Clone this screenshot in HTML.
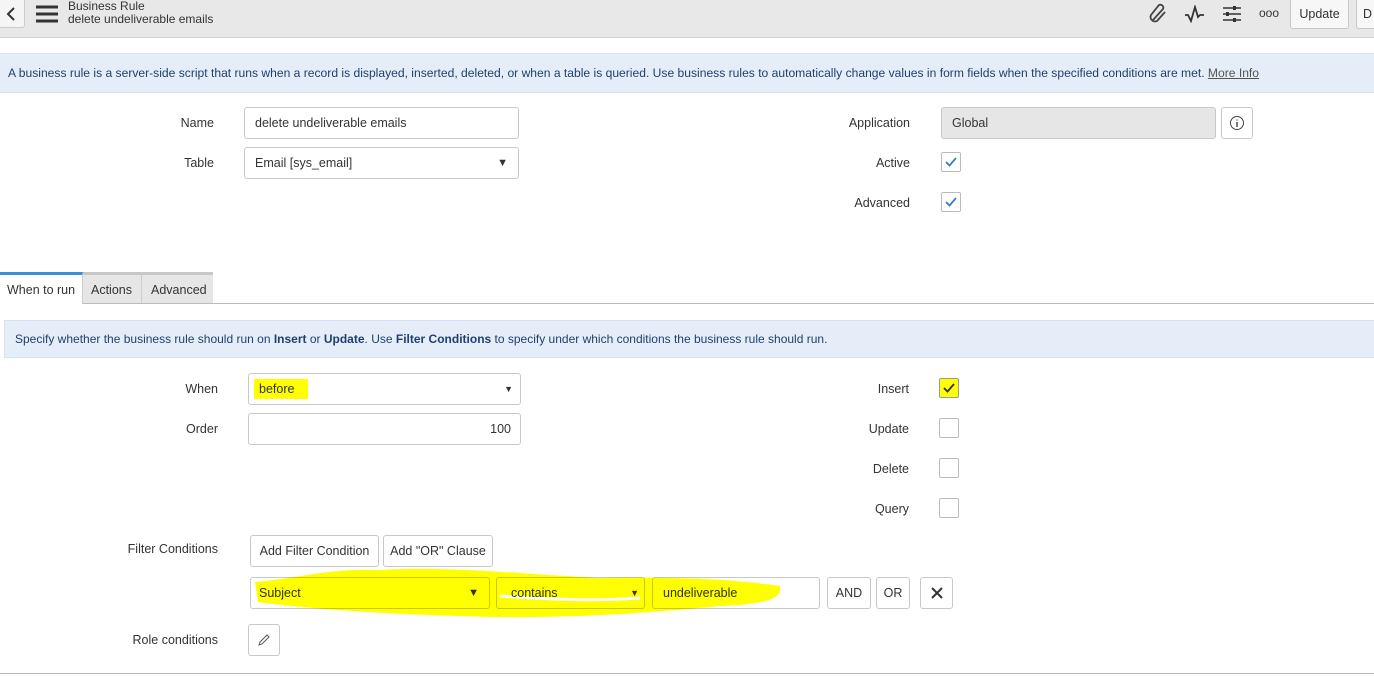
<!DOCTYPE html>
<html><head><meta charset="utf-8"><style>
*{box-sizing:border-box;margin:0;padding:0}
body{width:1374px;height:676px;position:relative;background:#fff;font-family:"Liberation Sans",sans-serif;font-size:12.5px;color:#333;overflow:hidden}
.a{position:absolute}
.lbl{position:absolute;text-align:right;white-space:nowrap;color:#333}
.box{position:absolute;border:1px solid #c8c8c8;border-radius:3px;background:#fff;padding-left:10px;display:flex;align-items:center;white-space:nowrap}
.btn{position:absolute;border:1px solid #c8c8c8;border-radius:3px;background:#fff;display:flex;align-items:center;justify-content:center;white-space:nowrap;color:#333}
.cb{position:absolute;width:20px;height:20px;border:1px solid #bbb;border-radius:2px;background:#fff}
.banner{position:absolute;background:#e5eef8;border-top:1px solid #d6e2ef;border-bottom:1px solid #d6e2ef;color:#1f3f6e;white-space:nowrap;display:flex;align-items:center}
</style></head><body>
<div class="a" style="left:0;top:0;width:1374px;height:38px;background:#e8e8e8;border-bottom:1px solid #cfcfcf"></div>
<div class="a" style="left:-2px;top:-2px;width:27px;height:30px;background:#f5f5f5;border:1px solid #ccc;border-radius:3px"></div>
<svg class="a" style="left:5px;top:6px" width="12" height="16"><path d="M9 2L3 8L9 14" stroke="#333" stroke-width="2" fill="none"/></svg>
<svg class="a" style="left:36px;top:5px" width="22" height="18"><path d="M0 2H22M0 9H22M0 16H22" stroke="#333" stroke-width="3"/></svg>
<div class="a" style="left:68px;top:0px;font-size:12px;color:#333;line-height:13px">Business Rule<br>delete undeliverable emails</div>
<svg class="a" style="left:1148px;top:3px" width="22" height="22"><path d="M5 17L15 6a3 3 0 0 0-4-4L3 12a4.5 4.5 0 0 0 6 6L17 9" stroke="#444" stroke-width="1.8" fill="none"/></svg>
<svg class="a" style="left:1184px;top:5px" width="22" height="18"><path d="M1 10L4 10L7 16L11 2L14 12L16 10L20 10" stroke="#333" stroke-width="1.8" fill="none"/></svg>
<svg class="a" style="left:1222px;top:4px" width="20" height="20"><path d="M1 4H19M1 10H19M1 16H19" stroke="#333" stroke-width="1.6"/><rect x="11" y="2" width="3" height="4" fill="#333"/><rect x="4" y="8" width="3" height="4" fill="#333"/><rect x="11" y="14" width="3" height="4" fill="#333"/></svg>
<div class="a" style="left:1259px;top:6px;font-size:12px;color:#333">ooo</div>
<div class="btn" style="left:1290px;top:-2px;width:59px;height:31px;background:#f7f7f7">Update</div>
<div class="btn" style="left:1356px;top:-2px;width:30px;height:31px;background:#f7f7f7;justify-content:flex-start;padding-left:6px">D</div>

<div class="banner" style="left:0;top:53px;width:1374px;height:40px;padding-left:8px;font-size:12.1px">A business rule is a server-side script that runs when a record is displayed, inserted, deleted, or when a table is queried. Use business rules to automatically change values in form fields when the specified conditions are met.&nbsp;<span style="color:#555;text-decoration:underline">More Info</span></div>

<div class="lbl" style="right:1160px;top:116px">Name</div>
<div class="box" style="left:244px;top:107px;width:275px;height:32px">delete undeliverable emails</div>
<div class="lbl" style="right:1160px;top:156px">Table</div>
<div class="box" style="left:244px;top:147px;width:275px;height:32px">Email [sys_email]<span style="position:absolute;right:10px;font-size:11px">▼</span></div>

<div class="lbl" style="right:464px;top:116px">Application</div>
<div class="box" style="left:941px;top:107px;width:275px;height:32px;background:#e6e6e6">Global</div>
<div class="btn" style="left:1221px;top:107px;width:32px;height:32px"><svg width="16" height="16"><circle cx="8" cy="8" r="6.5" stroke="#444" fill="none"/><path d="M8 7V12M8 4.5V5.5" stroke="#444" stroke-width="1.4"/></svg></div>
<div class="lbl" style="right:464px;top:156px">Active</div>
<div class="cb" style="left:941px;top:152px"><svg width="18" height="18"><path d="M4 9L7.5 12.5L14 5" stroke="#3a7fd5" stroke-width="1.8" fill="none"/></svg></div>
<div class="lbl" style="right:464px;top:196px">Advanced</div>
<div class="cb" style="left:941px;top:192px"><svg width="18" height="18"><path d="M4 9L7.5 12.5L14 5" stroke="#3a7fd5" stroke-width="1.8" fill="none"/></svg></div>

<div class="a" style="left:0;top:303px;width:1374px;height:1px;background:#bbb"></div>
<div class="a" style="left:0;top:272px;width:83px;height:32px;background:#fff;border-top:3px solid #3b8fd9;border-right:1px solid #ccc;padding:8px 0 0 7px">When to run</div>
<div class="a" style="left:83px;top:272px;width:59px;height:31px;background:#e6e6e6;border-top:3px solid #c8c8c8;border-right:1px solid #ccc;padding:8px 0 0 8px">Actions</div>
<div class="a" style="left:142px;top:272px;width:71px;height:31px;background:#e6e6e6;border-top:3px solid #c8c8c8;padding:8px 0 0 9px">Advanced</div>

<div class="banner" style="left:4px;top:320px;width:1370px;height:38px;padding-left:10px;border-left:1px solid #d6e2ef;font-size:12px">Specify whether the business rule should run on&nbsp;<b style="font-weight:600">Insert</b>&nbsp;or&nbsp;<b style="font-weight:600">Update</b>. Use&nbsp;<b style="font-weight:600">Filter Conditions</b>&nbsp;to specify under which conditions the business rule should run.</div>

<div class="lbl" style="right:1156px;top:382px">When</div>
<div class="box" style="left:248px;top:373px;width:273px;height:32px"><span style="background:#ffff00;padding:3px 14px 3px 5px;margin-left:-5px">before</span><span style="position:absolute;right:7px;font-size:9px">▼</span></div>
<div class="lbl" style="right:1156px;top:422px">Order</div>
<div class="box" style="left:248px;top:413px;width:273px;height:32px;justify-content:flex-end;padding-right:9px">100</div>

<div class="lbl" style="right:465px;top:382px">Insert</div>
<div class="cb" style="left:939px;top:378px;background:#ffff00;border-color:#999"><svg width="18" height="18"><path d="M4 9L7.5 12.5L14 5" stroke="#333" stroke-width="1.8" fill="none"/></svg></div>
<div class="lbl" style="right:465px;top:422px">Update</div>
<div class="cb" style="left:939px;top:418px"></div>
<div class="lbl" style="right:465px;top:462px">Delete</div>
<div class="cb" style="left:939px;top:458px"></div>
<div class="lbl" style="right:465px;top:502px">Query</div>
<div class="cb" style="left:939px;top:498px"></div>

<div class="lbl" style="right:1156px;top:542px">Filter Conditions</div>
<div class="btn" style="left:250px;top:535px;width:129px;height:32px">Add Filter Condition</div>
<div class="btn" style="left:383px;top:535px;width:110px;height:32px">Add "OR" Clause</div>

<div class="box" style="left:250px;top:577px;width:240px;height:32px;padding-left:8px">Subject<span style="position:absolute;right:10px;font-size:11px">▼</span></div>
<div class="box" style="left:496px;top:577px;width:149px;height:32px;padding-left:14px">contains<span style="position:absolute;right:5px;font-size:9px">▼</span></div>
<div class="box" style="left:652px;top:577px;width:168px;height:32px">undeliverable</div>
<div class="btn" style="left:827px;top:577px;width:44px;height:32px">AND</div>
<div class="btn" style="left:876px;top:577px;width:34px;height:32px">OR</div>
<div class="btn" style="left:920px;top:577px;width:33px;height:32px"><svg width="14" height="14"><path d="M2 2L12 12M12 2L2 12" stroke="#333" stroke-width="2"/></svg></div>
<svg class="a" style="left:0;top:0;mix-blend-mode:multiply" width="1374" height="676"><path d="M255 582C300 578 330 568 380 570C450 566 520 574 600 578C680 576 740 580 780 586C782 598 770 604 720 606C660 612 560 620 460 616C380 614 300 608 258 602Z" fill="#ffff00"/><path d="M500 596C560 600 600 601 640 598" stroke="#fff" stroke-width="3" fill="none"/></svg>

<div class="lbl" style="right:1156px;top:633px">Role conditions</div>
<div class="btn" style="left:248px;top:624px;width:32px;height:32px"><svg width="14" height="14"><path d="M2 12L3 9L10 2L12 4L5 11Z" stroke="#555" fill="none"/></svg></div>
<div class="a" style="left:0;top:673px;width:1374px;height:1px;background:#bbb"></div>
</body></html>
